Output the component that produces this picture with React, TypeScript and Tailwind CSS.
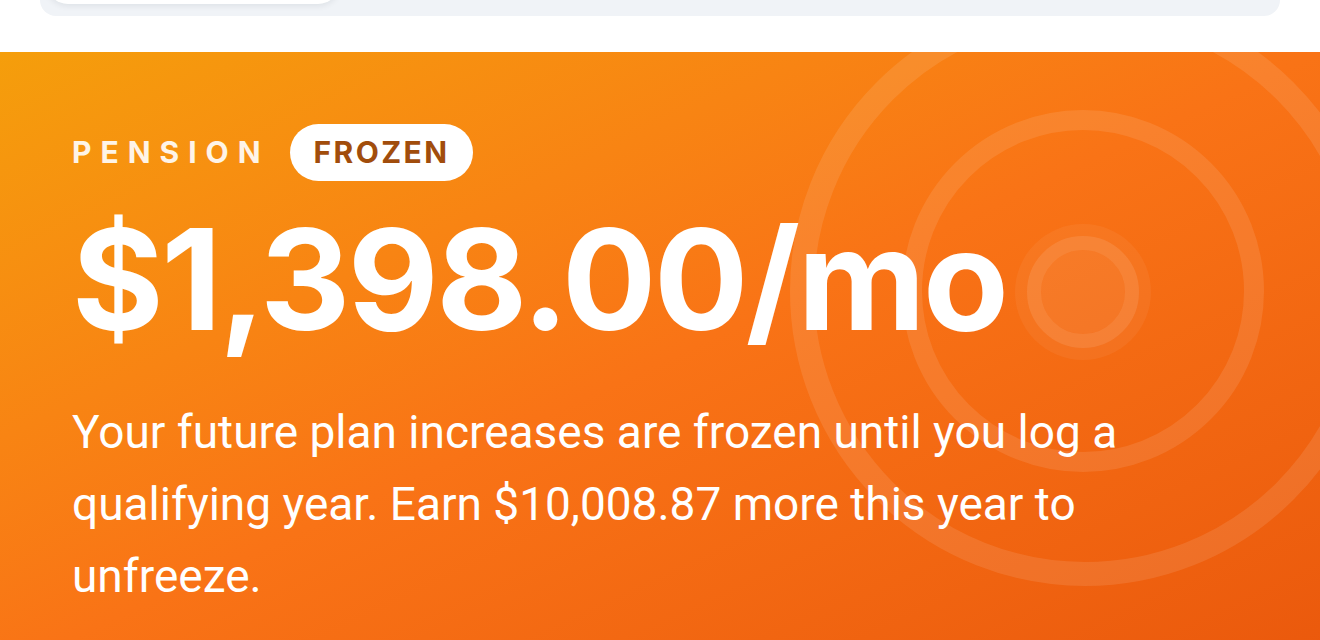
import React from "react";

const inter = "font-['Inter','Noto_Sans',sans-serif]";

function Rings() {
  return (
    <svg
      className="pointer-events-none absolute inset-0 h-full w-full"
      aria-hidden="true"
    >
      <circle cx="1085" cy="239" r="283" fill="none" stroke="white" strokeOpacity="0.1" strokeWidth="24" />
      <circle cx="1083" cy="239" r="171" fill="none" stroke="white" strokeOpacity="0.1" strokeWidth="20" />
      <circle cx="1083" cy="240" r="68" fill="white" fillOpacity="0.05" />
      <circle cx="1083" cy="240" r="49" fill="none" stroke="white" strokeOpacity="0.1" strokeWidth="14" />
      <circle cx="1083" cy="240" r="42" fill="white" fillOpacity="0.03" />
    </svg>
  );
}

export default function App() {
  return (
    <div className="min-h-[640px] w-[1320px] overflow-hidden bg-white">
      {/* segmented control peeking in from above */}
      <div className="h-[52px]">
        <div className="mx-[40px] flex h-4 overflow-hidden rounded-b-[24px] bg-[#f0f3f7] px-[6px]">
          <div className="-mt-[40px] h-[44px] w-[294px] rounded-[22px] bg-white shadow-[0_2px_6px_rgba(15,23,42,0.08)]" />
        </div>
      </div>

      {/* pension card */}
      <section className="relative h-[620px] overflow-hidden bg-gradient-to-br from-[#f59e0b] via-[#f97316] to-[#ea580c]">
        <Rings />
        <div className="relative z-10 px-[72px] pt-[72px]">
          <div className="flex items-center gap-[20px]">
            <span className={`${inter} text-[30px] font-bold tracking-[0.3em] text-white/90`}>
              PENSION
            </span>
            <span
              className={`${inter} flex h-[57px] items-center rounded-full bg-white px-[24px] text-[30px] font-bold tracking-[0.08em] text-[#a14d0c]`}
            >
              FROZEN
            </span>
          </div>
          <div
            className={`${inter} mt-[28px] text-[140px] leading-none font-bold tracking-[-0.018em] text-white`}
          >
            $1,398.00/mo
          </div>
          <p className="mt-[47px] font-['Roboto','Liberation_Sans',sans-serif] text-[46px] leading-[72px] text-white">
            Your future plan increases are frozen until you log a qualifying year. Earn $10,008.87 more this year to unfreeze.
          </p>
        </div>
      </section>
    </div>
  );
}
